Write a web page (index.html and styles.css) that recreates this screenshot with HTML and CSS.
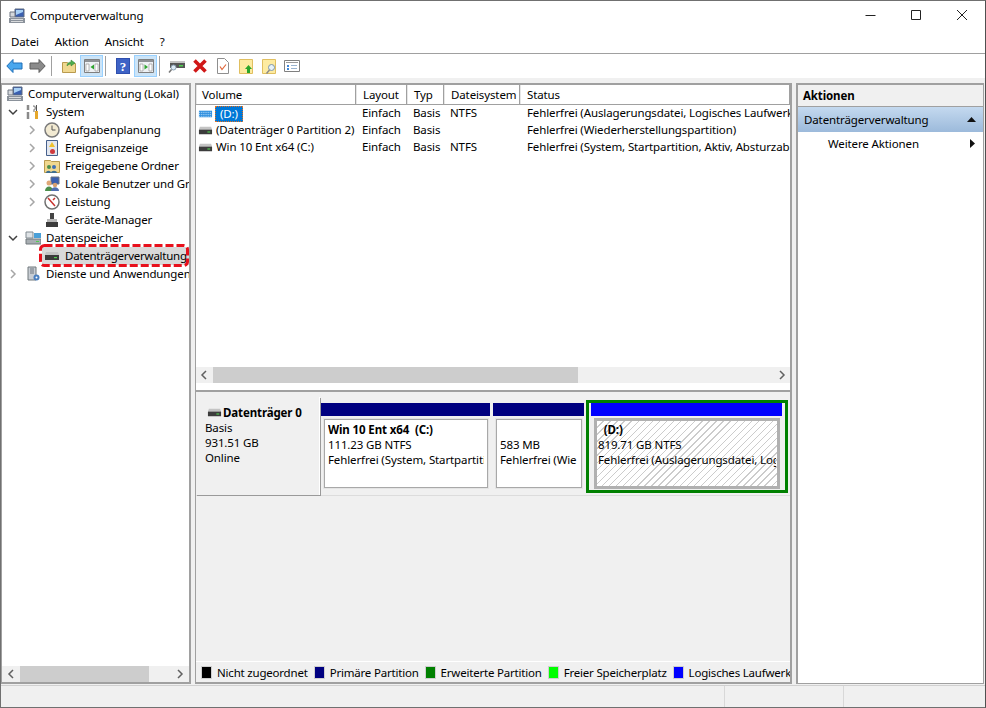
FILE: index.html
```html
<!DOCTYPE html>
<html lang="de">
<head>
<meta charset="utf-8">
<title>Computerverwaltung</title>
<link rel="stylesheet" href="styles.css">
</head>
<body>
<svg class="defs" width="0" height="0" aria-hidden="true">
  <defs>
    <symbol id="hdd" viewBox="0 0 16 16">
      <path d="M2 4h12l1 3H1z" fill="#c4c4c4"/>
      <path d="M1 7h14v5H1z" fill="#3c3c3c"/>
      <path d="M10 9h3v1.200h-3z" fill="#4fd14f"/>
    </symbol>
    <symbol id="computer" viewBox="0 0 16 16">
      <path d="M6 1h9v8H6z" fill="#3a5fb0" stroke="#5d6b80"/>
      <path d="M7 2h7v2L7 7z" fill="#a8d0f5"/>
      <path d="M1 4h5v5H1z" fill="#d5d8dc" stroke="#6c7480"/>
      <path d="M0 10h16v5H0z" fill="#8b929b"/>
      <path d="M2 11h12v1H2zM2 13h12v1H2z" fill="#d8dadc"/>
    </symbol>
    <symbol id="chev-r" viewBox="0 0 10 10"><path d="M3 1l4 4-4 4" fill="none" stroke="#a6a6a6" stroke-width="1.5"/></symbol>
    <symbol id="chev-d" viewBox="0 0 10 10"><path d="M1 3l4 4 4-4" fill="none" stroke="#404040" stroke-width="1.5"/></symbol>
    <symbol id="panel-l" viewBox="0 0 16 14">
      <path d="M.5.5h15v13H.5z" fill="#eef1f4" stroke="#7f7f7f"/>
      <path d="M1 1h14v2H1z" fill="#8f9296"/>
      <path d="M2 5h3v7H2zM11 5h3v7h-3z" fill="#fff" stroke="#8a8a8a" stroke-width=".6"/>
    </symbol>
    <symbol id="folder" viewBox="0 0 14 16">
      <path d="M.5 1.500h13v14H.5z" fill="#fdeba1" stroke="#e0bf60"/>
    </symbol>
  </defs>
</svg>
<div class="window">
  <header class="titlebar">
    <svg class="ico16" viewBox="0 0 16 16"><use href="#computer"/></svg>
    <span class="title-text">Computerverwaltung</span>
    <div class="win-controls">
      <svg class="wc" viewBox="0 0 46 30"><path d="M18.500 14.500h10" stroke="#222" fill="none"/></svg>
      <svg class="wc" viewBox="0 0 46 30"><path d="M18.500 9.500h9v9h-9z" stroke="#222" fill="none"/></svg>
      <svg class="wc" viewBox="0 0 46 30"><path d="M18 9l10 10M28 9L18 19" stroke="#222" fill="none"/></svg>
    </div>
  </header>
  <nav class="menubar">
    <span class="menu-item">Datei</span>
    <span class="menu-item">Aktion</span>
    <span class="menu-item">Ansicht</span>
    <span class="menu-item">?</span>
  </nav>
  <div class="toolbar">
    <span class="tb"><svg width="17" height="14" viewBox="0 0 17 14"><path d="M7 .5L.8 7 7 13.500V10h9V4H7z" fill="#49a7ee" stroke="#1f6fb8"/></svg></span>
    <span class="tb"><svg width="17" height="14" viewBox="0 0 17 14"><path d="M10 .5L16.200 7 10 13.500V10H1V4h9z" fill="#8a8a8a" stroke="#5c5c5c"/></svg></span>
    <span class="tb-sep"></span>
    <span class="tb"><svg width="16" height="16" viewBox="0 0 16 16"><path d="M1.500 4.500h5l1 1h7v9h-13z" fill="#f0d890" stroke="#b99a4e"/><path d="M6 8c0-3 2-4 4-4V2l4 3-4 3V6C8 6 7 7 6 8z" fill="#4fae4f" stroke="#2f7f2f" stroke-width=".5"/></svg></span>
    <span class="tb tb-on"><svg width="16" height="14" viewBox="0 0 16 14"><use href="#panel-l"/><path d="M10 5.500v5L6.500 8z" fill="#2fa52f"/></svg></span>
    <span class="tb-sep"></span>
    <span class="tb"><svg width="14" height="16" viewBox="0 0 14 16"><path d="M0 0h14v16H0z" fill="#2f4fae"/><path d="M1 1h12v14H1z" fill="#3e63c6"/><text x="7" y="13" class="help-q">?</text></svg></span>
    <span class="tb tb-on"><svg width="16" height="14" viewBox="0 0 16 14"><use href="#panel-l"/><path d="M6.500 5.500v5L10 8z" fill="#2fa52f"/></svg></span>
    <span class="tb-sep"></span>
    <span class="tb"><svg width="17" height="16" viewBox="0 0 17 16"><path d="M2 3h15v2H2z" fill="#c4c4c4"/><path d="M2 5h15v5H2z" fill="#555"/><path d="M11 7h4v1.500h-4z" fill="#4fd14f"/><circle cx="5.500" cy="9.500" r="2.500" fill="#dce9f5" stroke="#8aa0b4"/><path d="M3.500 11.500L1 14.500" stroke="#777" stroke-width="1.500"/></svg></span>
    <span class="tb"><svg width="14" height="14" viewBox="0 0 14 14"><path d="M1.500 1.500l11 11M12.500 1.500l-11 11" stroke="#d01818" stroke-width="3.600"/></svg></span>
    <span class="tb"><svg width="12" height="16" viewBox="0 0 12 16"><path d="M.5.500h7l4 4v11H.5z" fill="#fff" stroke="#8f8f8f"/><path d="M3 8.500l2 3 4-5" fill="none" stroke="#e0663a" stroke-width="1.200"/></svg></span>
    <span class="tb"><svg width="14" height="16" viewBox="0 0 14 16"><use href="#folder"/><path d="M9.500 7L13 11h-2v4H8v-4H6z" fill="#2aa52a"/></svg></span>
    <span class="tb"><svg width="14" height="16" viewBox="0 0 14 16"><use href="#folder"/><circle cx="9.500" cy="9.500" r="3" fill="#e6f2fa" stroke="#7e95a8"/><path d="M7.500 12L4.500 15.500" stroke="#8a8a8a" stroke-width="1.500"/></svg></span>
    <span class="tb"><svg width="16" height="12" viewBox="0 0 16 12"><path d="M.5.500h15v11H.5z" fill="#fff" stroke="#808080"/><path d="M2 2h12v1H2z" fill="#9a9a9a"/><path d="M3 5h2v2H3zM3 8h2v2H3z" fill="#3f86d8"/><path d="M7 5.500h6M7 8.500h6" stroke="#9ab4d0"/></svg></span>
  </div>
  <main class="panes">
    <section class="pane tree">
      <div class="tree-rows">
        <div class="row lvl0"><svg class="ico16" viewBox="0 0 16 16"><use href="#computer"/></svg><span>Computerverwaltung (Lokal)</span></div>
        <div class="row lvl1"><svg class="chev" viewBox="0 0 10 10"><use href="#chev-d"/></svg><svg class="ico16" viewBox="0 0 16 16"><path d="M3 1v5M3 8v7" stroke="#8a8a8a" stroke-width="2.500"/><path d="M8 2c3 0 3 3 1 4v2" fill="none" stroke="#9a9a9a" stroke-width="1.500"/><path d="M10 7h3v8h-3z" fill="#e6a82c"/><path d="M11 1h1v6h-1z" fill="#555"/></svg><span>System</span></div>
        <div class="row lvl2"><svg class="chev" viewBox="0 0 10 10"><use href="#chev-r"/></svg><svg class="ico16" viewBox="0 0 16 16"><circle cx="8" cy="8" r="7" fill="#f2ead2" stroke="#7a7a7a" stroke-width="1.500"/><path d="M8 3.500V8h3.500" fill="none" stroke="#555"/></svg><span>Aufgabenplanung</span></div>
        <div class="row lvl2"><svg class="chev" viewBox="0 0 10 10"><use href="#chev-r"/></svg><svg class="ico16" viewBox="0 0 16 16"><path d="M2.500.5h11v15h-11z" fill="#e3e7ef" stroke="#46608c"/><path d="M8 2l3 5H5z" fill="#eec22e"/><circle cx="8.500" cy="11.500" r="2.500" fill="#d0393d"/></svg><span>Ereignisanzeige</span></div>
        <div class="row lvl2"><svg class="chev" viewBox="0 0 10 10"><use href="#chev-r"/></svg><svg class="ico16" viewBox="0 0 16 16"><path d="M.5 2.500h6l1 1h8v11H.5z" fill="#f0d890" stroke="#b99a4e"/><circle cx="5" cy="9" r="2" fill="#4c8f4c"/><circle cx="10" cy="9" r="2" fill="#3f6fb5"/><path d="M2 15c0-3 5-3 5 0zM7 15c0-3 6-3 6 0z" fill="#3f6f8f"/></svg><span>Freigegebene Ordner</span></div>
        <div class="row lvl2"><svg class="chev" viewBox="0 0 10 10"><use href="#chev-r"/></svg><svg class="ico16" viewBox="0 0 16 16"><path d="M7 1h8v7H7z" fill="#3a5fb0" stroke="#6c7480"/><circle cx="5" cy="7" r="2.500" fill="#e0a878"/><path d="M1 15c0-6 8-6 8 0z" fill="#4c8f4c"/><circle cx="11" cy="9" r="2.200" fill="#d8a070"/><path d="M7 15c0-5 8-5 8 0z" fill="#4f6fb0"/></svg><span>Lokale Benutzer und Gru</span></div>
        <div class="row lvl2"><svg class="chev" viewBox="0 0 10 10"><use href="#chev-r"/></svg><svg class="ico16" viewBox="0 0 16 16"><circle cx="8" cy="8" r="7" fill="#fff" stroke="#707070" stroke-width="1.500"/><path d="M4 4l7 8M11 4l-2 2" fill="none" stroke="#c8322e" stroke-width="1.500"/></svg><span>Leistung</span></div>
        <div class="row lvl2"><span class="chev"></span><svg class="ico16" viewBox="0 0 16 16"><path d="M6 1h4v6H6z" fill="#444"/><path d="M3 7h10v3H3z" fill="#b8b8b8"/><path d="M2 10h12v5H2z" fill="#3c3c3c"/></svg><span>Geräte-Manager</span></div>
        <div class="row lvl1"><svg class="chev" viewBox="0 0 10 10"><use href="#chev-d"/></svg><svg class="ico16" viewBox="0 0 16 16"><path d="M1 2h7v6H1z" fill="#dfe3e6" stroke="#808a90"/><path d="M9 3h7v5H9z" fill="#4aa0d8"/><path d="M1 9h15v5H1z" fill="#a8aeb2" stroke="#70787c"/><path d="M11 11h3v1h-3z" fill="#4fd14f"/></svg><span>Datenspeicher</span></div>
        <div class="row lvl2 selected"><span class="chev"></span><svg class="ico16" viewBox="0 0 16 16"><use href="#hdd"/></svg><span class="sel-label">Datenträgerverwaltung</span><svg class="annotation" viewBox="0 0 150 23"><rect x="1.500" y="1.500" width="147" height="20" rx="4" fill="none" stroke="#e8101c" stroke-width="3" stroke-dasharray="8 3"/></svg></div>
        <div class="row lvl1"><svg class="chev" viewBox="0 0 10 10"><use href="#chev-r"/></svg><svg class="ico16" viewBox="0 0 16 16"><path d="M3 1h8v13H3z" fill="#c9ced4" stroke="#70787c"/><path d="M5 3h4M5 5h4M5 7h4" stroke="#6f7780"/><circle cx="11.500" cy="11.500" r="3" fill="#4a7fc0"/><circle cx="11.500" cy="11.500" r="1" fill="#fff"/></svg><span>Dienste und Anwendungen</span></div>
      </div>
      <div class="hscroll tree-scroll">
        <svg class="arrow" viewBox="0 0 10 10"><path d="M7 1L3 5l4 4" fill="none" stroke="#606060" stroke-width="1.500"/></svg>
        <div class="track"><div class="thumb tree-thumb"></div></div>
        <svg class="arrow" viewBox="0 0 10 10"><path d="M3 1l4 4-4 4" fill="none" stroke="#606060" stroke-width="1.500"/></svg>
      </div>
    </section>
    <section class="pane center">
      <div class="list">
        <div class="thead">
          <div class="th c-vol">Volume</div>
          <div class="th c-lay">Layout</div>
          <div class="th c-typ">Typ</div>
          <div class="th c-fs">Dateisystem</div>
          <div class="th c-st">Status</div>
        </div>
        <div class="trow">
          <div class="td c-vol"><svg class="ico-vol" viewBox="0 0 16 16"><path d="M1 5h14v7H1z" fill="#2f8fdf"/><path d="M1 5h14M1 7h14M1 9h14M1 11h14" stroke="#bfe0f8" stroke-dasharray="1 1"/></svg><span class="sel-text">(D:)</span></div>
          <div class="td c-lay">Einfach</div><div class="td c-typ">Basis</div><div class="td c-fs">NTFS</div>
          <div class="td c-st">Fehlerfrei (Auslagerungsdatei, Logisches Laufwerk)</div>
        </div>
        <div class="trow">
          <div class="td c-vol"><svg class="ico-vol" viewBox="0 0 16 16"><use href="#hdd"/></svg><span>(Datenträger 0 Partition 2)</span></div>
          <div class="td c-lay">Einfach</div><div class="td c-typ">Basis</div><div class="td c-fs"></div>
          <div class="td c-st">Fehlerfrei (Wiederherstellungspartition)</div>
        </div>
        <div class="trow">
          <div class="td c-vol"><svg class="ico-vol" viewBox="0 0 16 16"><use href="#hdd"/></svg><span>Win 10 Ent x64 (C:)</span></div>
          <div class="td c-lay">Einfach</div><div class="td c-typ">Basis</div><div class="td c-fs">NTFS</div>
          <div class="td c-st">Fehlerfrei (System, Startpartition, Aktiv, Absturzabbild)</div>
        </div>
        <div class="list-fill"></div>
        <div class="hscroll list-scroll">
          <svg class="arrow" viewBox="0 0 10 10"><path d="M7 1L3 5l4 4" fill="none" stroke="#606060" stroke-width="1.500"/></svg>
          <div class="track"><div class="thumb list-thumb"></div></div>
          <svg class="arrow" viewBox="0 0 10 10"><path d="M3 1l4 4-4 4" fill="none" stroke="#606060" stroke-width="1.500"/></svg>
        </div>
      </div>
      <div class="graph">
        <div class="disk">
          <div class="disk-label">
            <div class="disk-name"><svg class="ico-disk" viewBox="0 0 16 16"><use href="#hdd"/></svg><b>Datenträger 0</b></div>
            <div>Basis</div>
            <div>931.51 GB</div>
            <div>Online</div>
          </div>
          <div class="parts">
            <div class="part part-c">
              <div class="bar navy"></div>
              <div class="box">
                <b>Win 10 Ent x64&nbsp; (C:)</b>
                <span>111.23 GB NTFS</span>
                <span>Fehlerfrei (System, Startpartiti</span>
              </div>
            </div>
            <div class="part part-r">
              <div class="bar navy"></div>
              <div class="box">
                <b>&nbsp;</b>
                <span>583 MB</span>
                <span>Fehlerfrei (Wie</span>
              </div>
            </div>
            <div class="part part-d">
              <div class="bar blue"></div>
              <div class="box hatch">
                <b>&nbsp;&nbsp;(D:)</b>
                <span>819.71 GB NTFS</span>
                <span>Fehlerfrei (Auslagerungsdatei, Log</span>
              </div>
            </div>
          </div>
        </div>
      </div>
      <div class="legend">
        <span class="lg"><i class="sw s-black"></i>Nicht zugeordnet</span>
        <span class="lg"><i class="sw s-navy"></i>Primäre Partition</span>
        <span class="lg"><i class="sw s-green"></i>Erweiterte Partition</span>
        <span class="lg"><i class="sw s-lime"></i>Freier Speicherplatz</span>
        <span class="lg"><i class="sw s-blue"></i>Logisches Laufwerk</span>
      </div>
    </section>
    <aside class="pane actions">
      <div class="act-head">Aktionen</div>
      <div class="act-group"><span>Datenträgerverwaltung</span><svg width="9" height="5" viewBox="0 0 9 5"><path d="M4.500 0L9 5H0z" fill="#111"/></svg></div>
      <div class="act-item"><span>Weitere Aktionen</span><svg width="5" height="9" viewBox="0 0 5 9"><path d="M0 0l5 4.500L0 9z" fill="#111"/></svg></div>
    </aside>
  </main>
  <footer class="status">
    <div class="st st-a"></div>
    <div class="st st-b"></div>
    <div class="st st-c"></div>
  </footer>
</div>
</body>
</html>
```

FILE: styles.css
```css
* { box-sizing: border-box; }
html, body { margin: 0; padding: 0; }
body { width: 986px; height: 708px; overflow: hidden; background: #f0f0f0; font-family: "Noto Sans", "Open Sans", sans-serif; font-size: 11.5px; letter-spacing: -.12px; color: #000; }
.defs { position: absolute; }
.window { width: 986px; height: 708px; display: flex; flex-direction: column; border: 1px solid #707070; border-right-color: #505050; background: #f0f0f0; }
.ico16 { width: 16px; height: 16px; flex: none; display: block; }

.titlebar { height: 30px; flex: none; display: flex; align-items: center; padding-left: 8px; background: #fff; }
.title-text { margin-left: 5px; padding-bottom: 2px; }
.win-controls { margin-left: auto; display: flex; }
.wc { width: 46px; height: 30px; display: block; }

.menubar { height: 23px; flex: none; display: flex; align-items: center; background: #fff; border-bottom: 1px solid #a0a0a0; padding: 0 0 1px 10px; }
.menu-item { margin-right: 16px; }

.toolbar { height: 24px; flex: none; display: flex; align-items: center; background: #fff; padding-left: 2px; }
.tb { width: 23px; height: 22px; display: flex; align-items: center; justify-content: center; border: 1px solid transparent; }
.tb-on { background: #cce4f7; border-color: #99d1ff; }
.tb-sep { width: 1px; height: 20px; background: #a0a0a0; margin: 0 5px 0 2px; }
.help-q { font: bold 13px "Liberation Serif", serif; fill: #fff; text-anchor: middle; }

.panes { flex: 1; min-height: 0; display: flex; gap: 4px; padding: 5px 0 1px 0; }
.pane { border: 1px solid #a0a0a0; border-top-width: 2px; display: flex; flex-direction: column; background: #fff; min-height: 0; overflow: hidden; }

.tree { width: 190px; border-right-width: 2px; border-bottom-width: 2px; }
.tree-rows { flex: 1; min-height: 0; }
.row { height: 18px; display: flex; align-items: center; position: relative; white-space: nowrap; }
.row > span:last-of-type { margin-left: 5px; padding-bottom: 2px; }
.lvl0 { padding-left: 5px; }
.lvl1 { padding-left: 6px; }
.lvl2 { padding-left: 25px; }
.chev { width: 10px; height: 10px; flex: none; display: block; margin-right: 7px; }
.selected { background: #d9d9d9; margin-left: 40px; padding-left: 0; }
.selected .chev { display: none; }
.selected .ico16 { margin-left: 2px; }
.sel-label { letter-spacing: -.25px; }
.annotation { position: absolute; left: -3px; top: -3px; width: 150px; height: 23px; display: block; }
.hscroll { height: 16px; flex: none; display: flex; align-items: center; background: #f0f0f0; }
.arrow { width: 10px; height: 10px; flex: none; }
.track { flex: 1; height: 100%; }
.thumb { height: 100%; background: #cdcdcd; }
.tree-scroll { padding: 0 4px; }
.tree-scroll .track { margin: 0 4px; }
.tree-thumb { width: 129px; }
.list-scroll { padding: 0 3px; }
.list-scroll .track { margin: 0 4px; }
.list-thumb { width: 365px; }

.center { width: 597px; border-right-width: 2px; border-bottom-width: 2px; background: #f0f0f0; }
.list { height: 307px; flex: none; display: flex; flex-direction: column; background: #fff; border-bottom: 2px solid #a0a0a0; padding-bottom: 7px; }
.list-fill { flex: 1; }
.thead { display: flex; height: 20px; flex: none; border-bottom: 1px solid #a0a0a0; }
.th { height: 19px; line-height: 19px; padding-left: 6px; border-right: 1px solid #a0a0a0; border-left: 1px solid #e6e6e6; white-space: nowrap; }
.th.c-vol { padding-left: 5px; }
.trow { display: flex; height: 17px; flex: none; align-items: center; white-space: nowrap; }
.td { padding-left: 6px; overflow: hidden; line-height: 15px; height: 17px; }
.c-vol { width: 160px; } .c-lay { width: 51px; } .c-typ { width: 37px; } .c-fs { width: 76px; } .c-st { flex: 1; min-width: 0; padding-left: 7px; }
.th.c-st { padding-left: 6px; }
.trow .c-vol { display: flex; align-items: center; padding-left: 2px; }
.trow .c-vol span { padding-bottom: 2px; }
.ico-vol { width: 15px; height: 15px; flex: none; margin-right: 3px; }
.trow .c-vol .sel-text { background: #0078d7; color: #fff; outline: 1px dotted #e8701c; outline-offset: -1px; padding: 0 5px 1px; margin-left: -1px; line-height: 15px; }

.graph { flex: 1; min-height: 0; background: #f0f0f0; }
.disk { height: 104px; display: flex; border-bottom: 1px solid #dcdcdc; background: #f0f0f0; padding-top: 8px; }
.disk-label { width: 124px; flex: none; height: 98px; margin-top: -3px; padding: 7px 0 0 9px; line-height: 15px; border-right: 1px solid #fff; box-shadow: 1px 1px 0 #9a9a9a; }
.disk-name { display: flex; align-items: center; height: 16px; }
.ico-disk { width: 15px; height: 15px; margin: 0 1px 0 2px; }
.parts { display: flex; flex: 1; min-width: 0; padding: 0 0 0 1px; gap: 3px; }
.part { display: flex; flex-direction: column; min-width: 0; flex: none; }
.part-c { width: 169px; padding-top: 3px; }
.part-r { width: 91px; padding-top: 3px; }
.part-d { width: 202px; height: 93px; border: 3px solid #008000; margin-left: -1px; padding: 0 3px 0 2px; }
.bar { height: 13px; flex: none; }
.navy { background: #000080; }
.blue { background: #0000ff; }
.box { height: 69px; margin: 3px 2px 0 3px; padding: 2px 3px 0; border: 1px solid #a8a8a8; box-shadow: 0 0 0 1px #e4e4e4; background: #fff; display: flex; flex-direction: column; line-height: 15px; overflow: hidden; white-space: nowrap; }
.box > * { overflow: hidden; }
.part-d .box { margin: 2px 2px 0 3px; border: 3px solid #b0b0b0; box-shadow: none; padding: 1px 1px 0 1px; height: 71px; }
.hatch { background: repeating-linear-gradient(135deg, #fff 0, #fff 4px, #cccccc 4px, #cccccc 5px); }

.legend { height: 21px; flex: none; display: flex; align-items: center; gap: 6px; padding-left: 5px; letter-spacing: -.2px; background: #f0f0f0; border-top: 1px solid #fff; white-space: nowrap; overflow: hidden; }
.lg { display: flex; align-items: center; }
.sw { width: 11px; height: 13px; margin-right: 5px; border: 1px solid #cfcfcf; }
.s-black { background: #000; } .s-navy { background: #000080; } .s-green { background: #008000; } .s-lime { background: #00ff00; } .s-blue { background: #0000ff; }

.actions { flex: 1; min-width: 0; margin-right: 1px; border-left-width: 2px; }
.act-head { height: 22px; line-height: 22px; padding-left: 5px; font-weight: 700; background: #f0f0f0; border-bottom: 1px solid #a0a0a0; flex: none; }
.act-group { height: 25px; display: flex; align-items: center; justify-content: space-between; padding: 0 7px 0 6px; background: linear-gradient(#c4d9ef, #9cbadb); flex: none; }
.act-item { height: 24px; display: flex; align-items: center; justify-content: space-between; padding: 0 8px 2px 30px; flex: none; }

.status { height: 22px; flex: none; display: flex; border-top: 1px solid #d0d0d0; background: #f0f0f0; }
.st { height: 100%; }
.st-a { width: 724px; border-right: 1px solid #d8d8d8; }
.st-b { width: 119px; border-right: 1px solid #d8d8d8; }
.st-c { flex: 1; }
```
